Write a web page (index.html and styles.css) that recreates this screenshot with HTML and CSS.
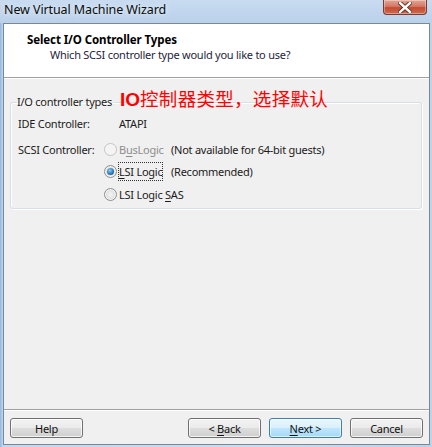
FILE: index.html
```html
<!DOCTYPE html>
<html>
<head>
<meta charset="utf-8">
<link rel="stylesheet" href="styles.css">
</head>
<body>
<div class="window">
  <div class="titlebar">
    <span class="title">New Virtual Machine Wizard</span>
    <div class="close">
      <svg width="14" height="11" viewBox="0 0 14 11">
        <path d="M2 1 L12 10 M12 1 L2 10" stroke="#5a2a20" stroke-width="4.2" stroke-linecap="square"/>
        <path d="M2 1 L12 10 M12 1 L2 10" stroke="#ffffff" stroke-width="2.4" stroke-linecap="square"/>
      </svg>
    </div>
  </div>
  <div class="client">
    <div class="header">
      <div class="h-title">Select I/O Controller Types</div>
      <div class="h-sub">Which SCSI controller type would you like to use?</div>
    </div>
    <div class="body">
      <fieldset class="group">
        <legend>I/O controller types</legend>
        <span class="note"><b>IO</b>控制器类型，选择默认</span>
        <div class="grid">
          <span class="lbl">IDE Controller:</span>
          <span class="val">ATAPI</span>

          <span class="lbl">SCSI Controller:</span>
          <span class="radio disabled"></span>
          <span class="opt dis">B<u>u</u>sLogic</span>
          <span class="hint">(Not available for 64-bit guests)</span>

          <span class="radio checked"></span>
          <span class="opt"><span class="focus"><u>L</u>SI Logic</span></span>
          <span class="hint">(Recommended)</span>

          <span class="radio"></span>
          <span class="opt wide">LSI Logic <u>S</u>AS</span>
        </div>
      </fieldset>
    </div>
    <div class="footer">
      <button class="btn">Help</button>
      <div class="spacer"></div>
      <button class="btn">&lt; <u>B</u>ack</button>
      <button class="btn default"><u>N</u>ext &gt;</button>
      <button class="btn">Cancel</button>
    </div>
  </div>
</div>
</body>
</html>
```
FILE: styles.css
```css
* { box-sizing: border-box; }
html, body { margin: 0; padding: 0; }
body {
  font-family: "Noto Sans", "Open Sans", sans-serif;
  font-size: 11px;
  letter-spacing: -0.25px;
  color: #1b1b1b;
}
.window {
  width: 432px;
  height: 447px;
  display: flex;
  flex-direction: column;
  background: linear-gradient(90deg, #8fb6e0 0px, #c3d8ef 3px, #c9dcf1 60%, #bcd3ec 100%);
  overflow: hidden;
}
.titlebar {
  height: 23px;
  display: flex;
  justify-content: space-between;
  align-items: flex-start;
  padding-left: 4px;
  padding-right: 5px;
  background: linear-gradient(180deg, #c8dbf0, #bad1ea);
}
.title {
  font-size: 12.5px;
  letter-spacing: -0.1px;
  line-height: 20px;
  color: #0c0c0c;
  text-shadow: 0 0 6px rgba(255,255,255,0.9);
}
.close {
  width: 44px;
  height: 15px;
  display: flex;
  align-items: center;
  justify-content: center;
  border: 1px solid #7a3a2e;
  border-top: none;
  border-radius: 0 0 4px 4px;
  background: linear-gradient(180deg, #e3a595 0%, #d47a66 45%, #c44a30 55%, #cf6a4f 100%);
  box-shadow: inset 0 0 0 1px rgba(255,255,255,0.35);
}
.client {
  margin: 0 2px 2px 3px;
  flex: 1;
  display: flex;
  flex-direction: column;
  border: 1px solid #7d8793;
  background: #f0f0f0;
}
.header {
  height: 54px;
  background: #ffffff;
  border-bottom: 1px solid #a0a0a0;
  padding: 8px 0 0 23px;
}
.h-title {
  font-weight: bold;
  font-size: 11.5px;
  letter-spacing: -0.1px;
  line-height: 15px;
  color: #000;
}
.h-sub {
  line-height: 16px;
  padding-left: 23px;
  color: #1e1e3a;
}
.body {
  flex: 1;
  border-top: 1px solid #ffffff;
  border-bottom: 1px solid #a0a0a0;
  padding: 15px 7px 0 6px;
}
.group {
  position: relative;
  margin: 0;
  padding: 0 0 0 7px;
  border: 1px solid #d5dfe5;
  border-radius: 3px;
  box-shadow: inset 1px 1px 0 #fff, 1px 1px 0 #fff;
}
.group legend {
  padding: 0 1px 0 0;
  margin-left: -1px;
  line-height: 16px;
}
.note {
  position: absolute;
  left: 109px;
  top: -22px;
  font-family: "Noto Sans CJK SC", sans-serif;
  font-size: 18.5px;
  line-height: 20px;
  color: #ff0000;
  letter-spacing: 0.3px;
}
.note b { font-family: "Liberation Sans", sans-serif; font-weight: bold; font-size: 19px; letter-spacing: 0; }
.grid {
  display: grid;
  grid-template-columns: 86px 15px 52px auto;
  grid-template-rows: 26px 26px 18px 28px;
  align-items: center;
}
.lbl { grid-column: 1; }
.val { grid-column: 3 / 5; }
.radio { grid-column: 2; }
.opt { grid-column: 3; white-space: nowrap; }
.opt.wide { grid-column: 3 / 5; }
.hint { grid-column: 4; }
.dis { color: #8d8d8d; }
.focus {
  outline: 1px dotted #333;
  outline-offset: 0px;
  padding: 1px 0;
}
.radio {
  width: 13px;
  height: 13px;
  border-radius: 50%;
  border: 1px solid #8e8f8f;
  background: radial-gradient(circle at 50% 50%, #f4f4f4 0%, #e1e1e1 55%, #cfcfcf 100%);
  box-shadow: inset 0 0 0 1px #f5f5f5;
  position: relative;
}
.radio.disabled {
  border-color: #c4c4c4;
  background: #f4f4f4;
}
.radio.checked::after {
  content: "";
  position: absolute;
  left: 2px;
  top: 2px;
  width: 7px;
  height: 7px;
  border-radius: 50%;
  background: radial-gradient(circle at 40% 35%, #8fd0f5 0%, #2d7ab8 55%, #15446e 100%);
}
.footer {
  height: 34px;
  border-top: 1px solid #ffffff;
  display: flex;
  align-items: flex-start;
  padding: 7px 6px 0 6px;
  gap: 8px;
}
.spacer { flex: 1; }
.btn {
  width: 73px;
  height: 20px;
  padding: 0;
  font-family: inherit;
  font-size: 11px;
  letter-spacing: -0.25px;
  color: #111;
  border: 1px solid #707070;
  border-radius: 3px;
  background: linear-gradient(180deg, #f2f2f2 0%, #ebebeb 48%, #dddddd 52%, #cfcfcf 100%);
  box-shadow: inset 0 0 0 1px rgba(255,255,255,0.75);
  line-height: 17px;
}
.btn.default {
  border-color: #3c7fb1;
  background: linear-gradient(180deg, #eaf6fd 0%, #d9f0fc 48%, #bee6fd 52%, #a7d9f5 100%);
  box-shadow: inset 0 0 0 1px rgba(255,255,255,0.6);
}
u { text-decoration: underline; text-underline-offset: 2px; }
```
